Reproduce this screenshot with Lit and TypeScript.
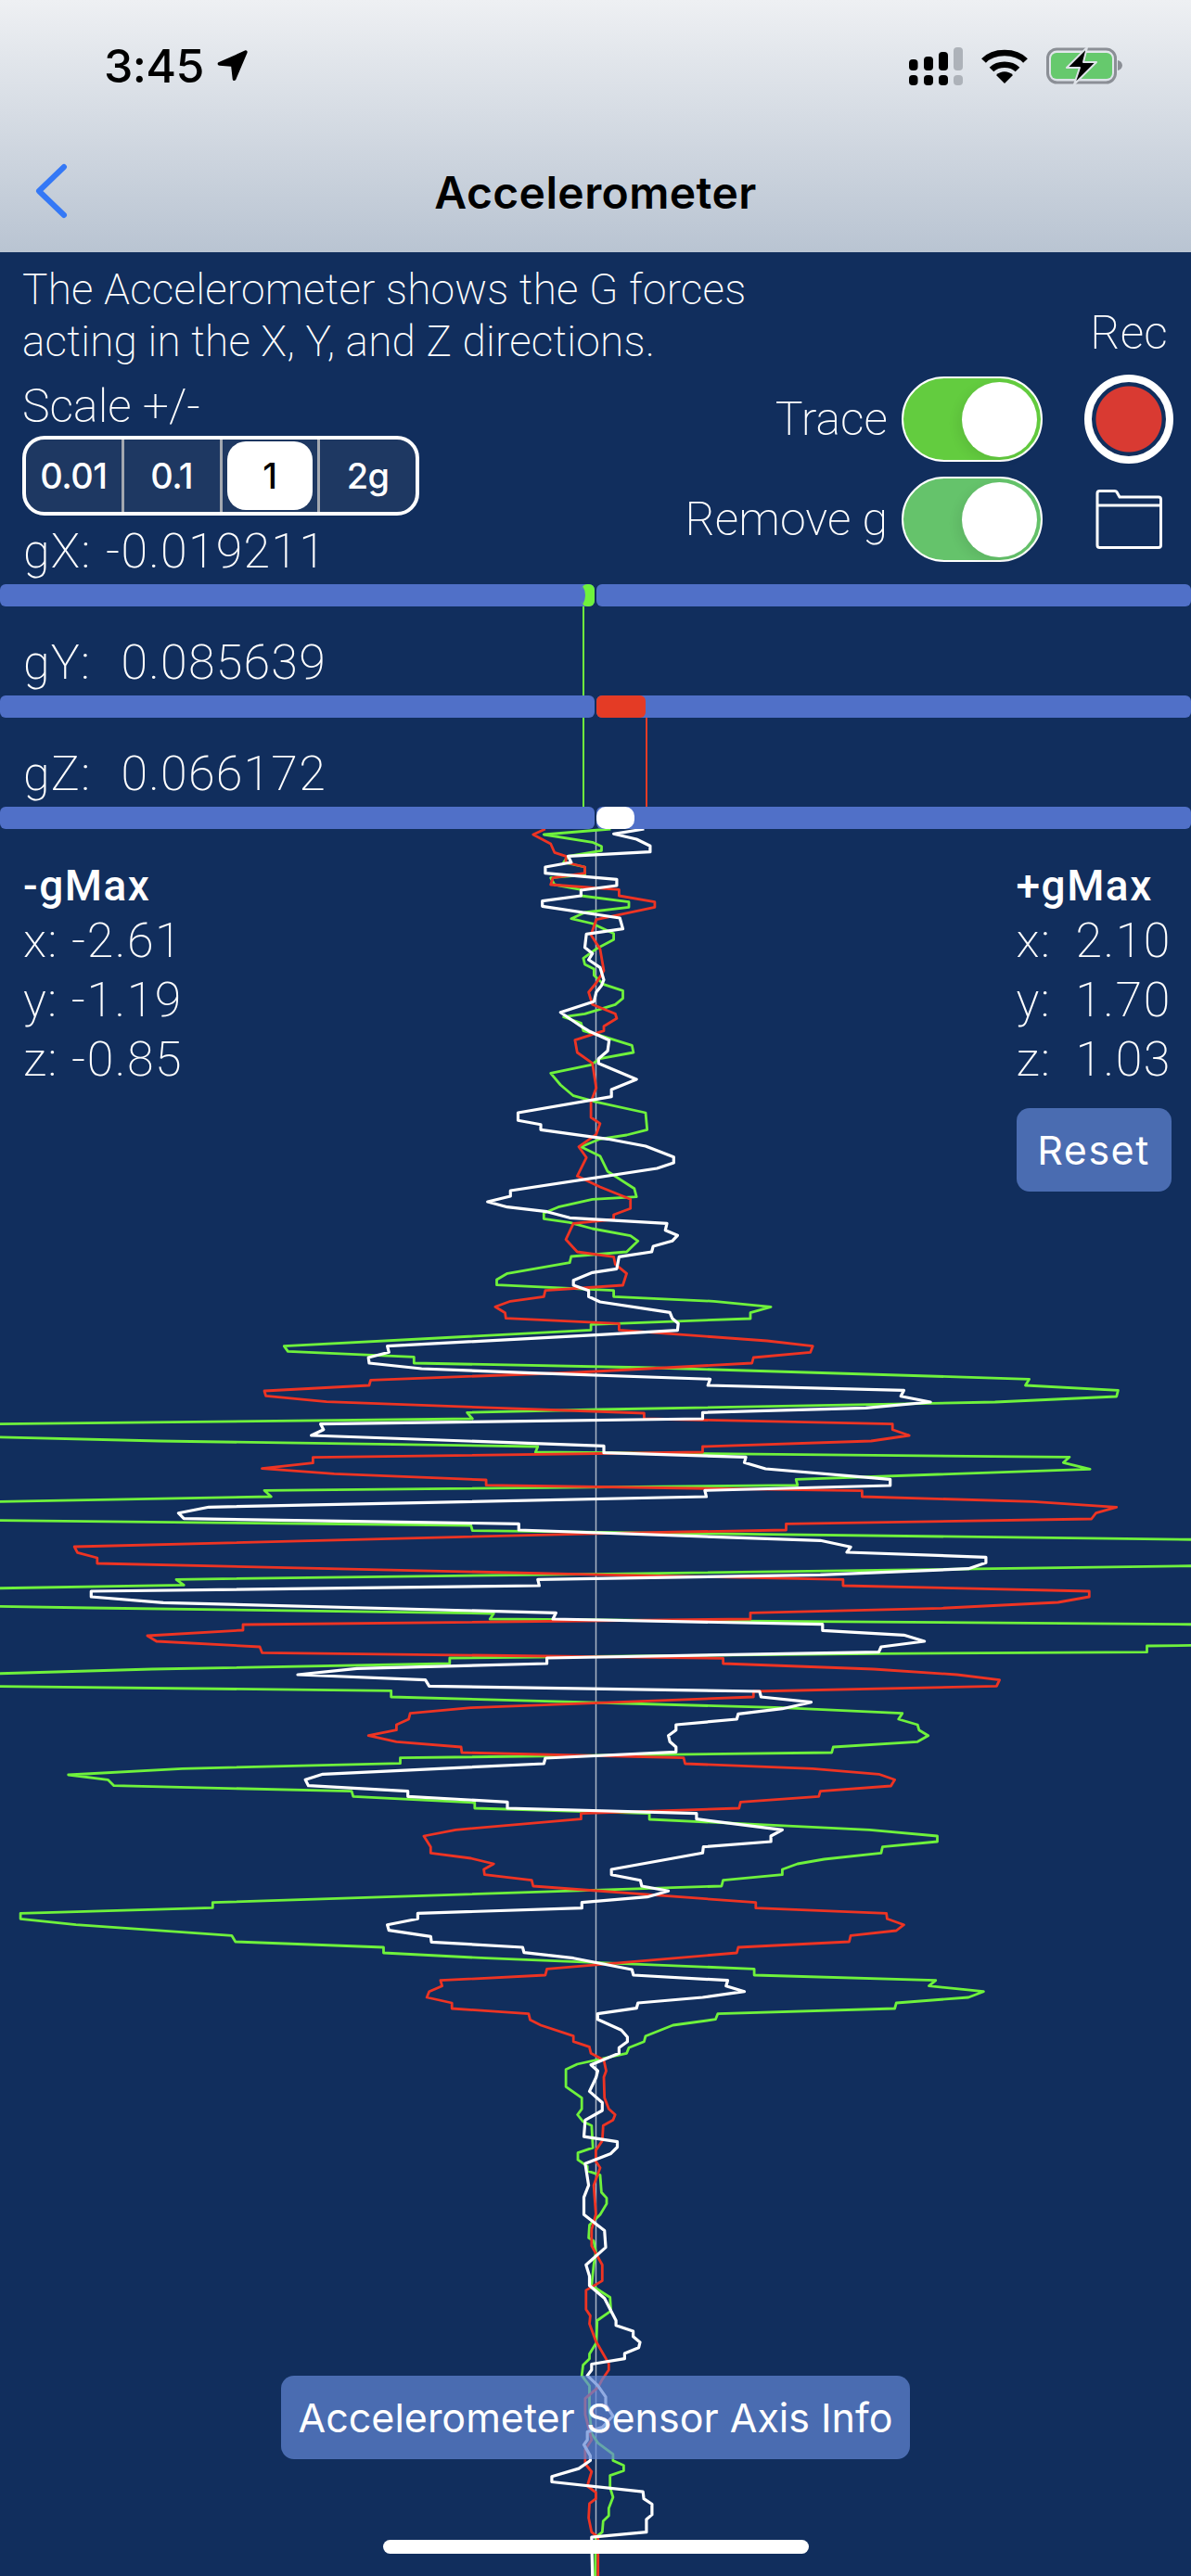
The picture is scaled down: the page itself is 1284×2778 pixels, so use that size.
import { LitElement, html, css, svg } from 'lit'
import { customElement } from 'lit/decorators.js'

// Traces were read off at different crop scales, so each chunk keeps its own mapping
type Chunk = { ox: number; oy: number; sx: number; sy: number; pts: number[] }

const mid = (oy: number, pts: number[]): Chunk => ({ ox: 0, oy, sx: 1.2212, sy: 3, pts })
const low = (pts: number[]): Chunk => ({ ox: 280, oy: 2240, sx: 2.166, sy: 2.914, pts })

const WHITE: Chunk[] = [
  mid(880, [848,42,808,58,838,75,856,97,856,116,748,130,752,150,718,165,718,185,812,205,812,225,765,240,765,258,714,275,714,292,816,330,820,365,772,382,770,425,780,445,775,465,790,490,795,530,792,548,785,570,782,600,738,635,765,680,775,695,802,725,800,760,788,785,788,800,838,852,805,885,805,908,682,960,682,985,712,998,712,1015,800,1045,850,1068,887,1103,887,1122,865,1140,672,1212,672,1230,642,1248,668,1265,720,1280,750,1300,878,1318,876,1340,892,1357,885,1375]),
  mid(1340, [860,12,858,30,815,46,812,85,780,97,755,122,755,138,775,155,775,175,790,192,882,226,885,245,893,262,892,284,790,298,510,335,512,355,485,372,486,390,555,408,700,422,935,442,932,462,1190,478,1186,497,1225,516,1140,535,925,550,925,570,422,587,426,605,410,624,795,658,795,680,982,694,980,712,1008,732,1172,766,1172,786,928,802,930,822,275,856,235,875,242,893,683,910,683,930,1080,964,1120,985,1115,1002,1298,1018,1298,1036,1275,1055,1080,1075,708,1090,710,1110,120,1128,120,1146,215,1165,732,1198,728,1218,1083,1235,1083,1255,1190,1270,1217,1290,1160,1308,1157,1325,720,1344,720,1362,470,1378]),
  mid(1800, [392,18,560,35,565,55,1000,72,1002,90,1068,107,1030,128,972,145,970,162,890,180,890,197,880,215,882,235,890,252,890,268,718,288,716,306,425,340,402,358,406,377,537,395,537,412,668,430,668,450,917,467,917,485,1030,520,1015,540,1015,558,926,575,925,595,805,648,805,665,843,683,845,702,880,718,852,737,766,755,766,773,550,790,550,808,510,827,512,845,567,865,568,883,688,900,690,917,755,935,832,972,834,990,958,1007,956,1025,980,1043,925,1062,840,1080,838,1097,787,1115,787,1133,818,1168,826,1190,826,1205,815,1225,815,1243,778,1280,787,1300,785,1320]),
  low([770,45,800,80,800,105,760,135,757,187,835,203,835,220,820,240,760,272,768,340,757,378,757,432,805,482,808,535,762,590,770,625,770,655,805,695,832,765,832,780,872,798,872,815,888,833,885,850,852,868,852,885,775,902,775,920,765,938,790,970,808,1005,808,1030,825,1065,800,1100,765,1115,765,1140,757,1155,772,1190,772,1205,745,1230,682,1255,682,1272,895,1303,897,1325,916,1342,916,1375,903,1390,903,1430,775,1446,777,1568]),
]

const GREEN: Chunk[] = [
  mid(880, [804,42,716,60,780,85,792,98,792,112,748,130,742,150,770,165,770,190,725,200,730,222,765,238,765,258,828,278,828,295,770,312,752,332,780,348,808,380,808,400,785,430,768,460,770,480,782,495,782,515,795,545,820,565,820,590,810,610,770,640,742,650,765,670,768,695,790,710,832,742,834,765,790,785,778,805,725,832,738,870,755,905,785,925,850,960,852,1015,825,1032,790,1045,765,1070,790,1100,800,1150,835,1205,838,1232,780,1240,735,1265,716,1285,716,1303,750,1315,780,1335,830,1358,840,1375]),
  mid(1340, [825,30,752,45,750,65,668,100,654,120,654,137,808,155,808,175,940,190,1015,208,988,227,988,246,778,265,778,283,374,335,379,352,545,370,545,390,860,405,1355,442,1350,462,1472,478,1470,498,1310,516,790,540,615,550,622,570,-40,588,-40,627,210,642,708,660,705,678,1408,694,1400,712,1435,733,1048,766,1050,785,348,802,357,822,-40,840,-40,898,620,915,622,932,1610,962,1610,1045,800,1072,232,1090,242,1108,-40,1120,-40,1175,120,1182,650,1200,645,1218,1610,1236,1610,1302,1510,1305,1510,1325,1157,1330,592,1344,592,1362,200,1380,-40,1397]),
  mid(1800, [-40,55,515,70,515,90,1030,125,1188,143,1183,162,1208,180,1210,197,1222,215,1208,235,1097,252,1095,270,527,287,527,305,240,322,90,342,142,358,150,377,463,395,465,412,625,432,625,450,855,467,855,486,1145,520,1234,540,1234,558,1162,575,1160,595,1085,615,1050,630,1030,648,1030,665,952,683,950,702,280,755,280,772,27,790,27,808,100,827,305,862,310,882,505,900,505,918,640,935,993,970,993,990,1232,1007,1223,1025,1295,1043,1275,1062,1180,1080,1178,1098,945,1115,942,1133,886,1152,850,1187,848,1205,828,1225,825,1243,760,1278,745,1295,745,1320]),
  low([715,30,752,65,752,100,742,118,755,140,775,152,778,222,743,238,743,260,765,280,765,295,795,308,798,362,810,380,810,398,795,432,770,465,768,505,780,515,785,550,780,590,775,655,818,692,820,735,788,765,786,835,770,870,770,885,755,905,752,938,770,970,770,1050,775,1120,790,1150,825,1185,825,1205,850,1220,850,1237,818,1252,818,1290,825,1320,815,1355,815,1378,802,1395,800,1430,785,1446,783,1568]),
]

const RED: Chunk[] = [
  mid(880, [718,42,702,60,725,90,730,118,745,130,745,150,770,165,770,185,728,200,725,222,815,238,815,258,862,278,862,295,810,322,785,335,778,385,790,430,795,500,785,540,775,570,780,610,810,640,812,655,795,680,795,695,757,725,760,765,780,800,785,880,778,925,778,975,790,995,785,1030,762,1070,772,1105,760,1165,790,1200,830,1240,830,1270,808,1290,808,1305,755,1318,745,1370]),
  mid(1340, [760,30,808,46,810,70,825,100,820,138,718,155,716,175,672,190,652,208,665,227,666,245,815,262,815,283,1010,318,1070,335,1067,355,992,372,990,390,760,420,488,445,486,462,348,480,350,496,430,515,848,552,848,570,1175,587,1175,605,1197,624,1147,642,925,660,925,678,412,695,412,713,345,731,440,748,640,768,640,785,1135,803,1135,822,1360,838,1470,856,1443,875,1437,894,1035,910,1035,930,810,940,98,984,102,1003,128,1020,128,1038,800,1075,1110,1090,1110,1110,1434,1128,1434,1146,1393,1164,1240,1183,988,1198,988,1218,320,1236,320,1254,194,1272,206,1290,342,1308,345,1327,952,1345,952,1362,1150,1380,1260,1398]),
  mid(1800, [1316,35,1312,55,992,72,992,90,620,125,540,143,538,162,522,180,522,197,485,215,522,235,607,252,608,270,900,287,902,306,1070,322,1157,340,1178,358,1173,378,1080,395,1078,412,975,430,973,450,765,467,765,485,600,520,558,540,567,575,567,595,620,612,650,630,637,648,638,665,700,683,702,702,995,755,995,773,1167,790,1168,808,1190,827,1180,846,1120,862,1118,882,972,900,970,918,720,970,718,990,580,1007,582,1025,565,1043,562,1062,595,1080,595,1098,696,1115,698,1135,712,1152,755,1187,755,1205,776,1222,778,1243,795,1265,798,1300,795,1320]),
  low([805,65,815,100,830,118,825,135,802,152,800,200,785,230,785,265,795,285,780,340,785,430,775,480,775,530,800,590,800,640,762,670,762,730,772,750,770,775,785,830,815,900,815,920,800,950,790,975,760,1010,760,1060,775,1140,760,1170,760,1215,775,1240,765,1285,785,1305,785,1325,770,1340,768,1385,775,1430,790,1446,790,1568]),
]

function toPoints(chunks: Chunk[]) {
  const out: string[] = []
  for (const c of chunks) {
    for (let i = 0; i < c.pts.length; i += 2) {
      const x = c.pts[i] / c.sx + c.ox
      const y = c.pts[i + 1] / c.sy + c.oy
      out.push(`${x.toFixed(1)},${y.toFixed(1)}`)
    }
  }
  return out.join(' ')
}

const SCALES = ['0.01', '0.1', '1', '2g']
const METERS = [
  { label: 'gX:', value: '-0.019211', fill: 'green', left: 627, width: 14 },
  { label: 'gY:', value: '0.085639', fill: 'red', left: 643, width: 53 },
  { label: 'gZ:', value: '0.066172', fill: 'white', left: 643, width: 41 },
]

@customElement('app-root')
export class AppRoot extends LitElement {
  static styles = css`
    :host {
      display: block;
      width: 1284px;
      font-family: Inter, 'Liberation Sans', sans-serif;
      color: #fff;
    }

    .screen {
      position: relative;
      width: 1284px;
      height: 2778px;
      overflow: hidden;
      background: #112e5d;
    }

    .graph {
      position: absolute;
      left: 0;
      top: 0;
    }

    /* header */
    .top {
      position: relative;
      height: 272px;
      background: linear-gradient(#eef0f3, #b9c4d2);
      color: #000;
    }

    .status {
      display: flex;
      justify-content: space-between;
      align-items: center;
      height: 52px;
      padding: 45px 74px 0 112px;
    }

    .clock {
      display: flex;
      align-items: center;
      gap: 14px;
      font-size: 50px;
      font-weight: 500;
      letter-spacing: -0.6px;
    }

    .status-icons {
      display: flex;
      align-items: center;
      gap: 20px;
    }

    .nav {
      display: flex;
      align-items: center;
      justify-content: center;
      position: relative;
      height: 70px;
      margin-top: 75px;
    }

    .back {
      position: absolute;
      left: 36px;
      top: 4px;
    }

    .title {
      font-size: 48px;
      font-weight: 600;
      letter-spacing: 0.4px;
    }

    /* controls */
    .panel {
      position: relative;
      display: flex;
      justify-content: space-between;
      height: 308px;
      font-family: Roboto, 'Liberation Sans', sans-serif;
    }

    .intro {
      flex: none;
      width: 560px;
      padding: 12px 0 0 24px;
      font-weight: 200;
      white-space: nowrap;
    }

    .desc {
      font-size: 46px;
      line-height: 56px;
      letter-spacing: 0.2px;
    }

    .scale-label {
      margin-top: 14px;
      font-size: 50px;
      line-height: 56px;
    }

    .seg {
      display: flex;
      box-sizing: border-box;
      width: 428px;
      height: 86px;
      margin-top: 4px;
      border: 4px solid #fff;
      border-radius: 24px;
      background: #1e3862;
      overflow: hidden;
      font-family: Inter, 'Liberation Sans', sans-serif;
    }

    .seg-item {
      position: relative;
      flex: 1;
      display: flex;
      align-items: center;
      justify-content: center;
      font-size: 38px;
      font-weight: 500;
      letter-spacing: -0.5px;
      border-left: 3px solid #a3a8b0;
    }

    .seg-item:first-child {
      border-left: none;
    }

    .seg-item span {
      position: relative;
    }

    .seg-item.on {
      color: #000;
    }

    .seg-item.on::before {
      content: '';
      position: absolute;
      inset: 2px 5px;
      border-radius: 20px;
      background: #fff;
    }

    .side {
      display: grid;
      grid-template-columns: auto 96px;
      grid-template-rows: 112px 108px 108px;
      column-gap: 45px;
      padding: 14px 19px 0 0;
      font-weight: 200;
      font-size: 50px;
      white-space: nowrap;
    }

    .rec-label {
      grid-column: 2;
      align-self: end;
      justify-self: center;
      padding-bottom: 10px;
    }

    .tog-row {
      grid-column: 1;
      display: flex;
      align-items: center;
      justify-content: flex-end;
      gap: 15px;
    }

    .toggle {
      position: relative;
      box-sizing: border-box;
      width: 152px;
      height: 92px;
      border: 2px solid #fff;
      border-radius: 46px;
      background: #63cc3f;
    }

    .toggle.soft {
      background: #65c36b;
    }

    .knob {
      position: absolute;
      right: 4px;
      top: 4px;
      width: 81px;
      height: 81px;
      border-radius: 50%;
      background: #fff;
      box-shadow: -5px 4px 12px rgba(0, 0, 0, 0.07);
    }

    .rec {
      box-sizing: border-box;
      width: 96px;
      height: 96px;
      align-self: center;
      border: 8px solid #fff;
      border-radius: 50%;
      background: radial-gradient(circle, #d93a32 0 35px, #112e5d 36px);
    }

    .folder {
      align-self: center;
      justify-self: center;
    }

    /* meters: the value is right aligned, as on the device */
    .meter-text {
      display: flex;
      justify-content: space-between;
      width: 327px;
      height: 50px;
      padding-left: 25px;
      font-family: Roboto, 'Liberation Sans', sans-serif;
      font-size: 52px;
      line-height: 30px;
      font-weight: 200;
      letter-spacing: 1.2px;
    }

    .meter + .meter {
      margin-top: 46px;
    }

    .bar {
      position: relative;
      display: flex;
      gap: 2px;
      height: 24px;
    }

    .bar i {
      flex: 1;
      background: #5070c8;
      border-radius: 6px;
    }

    .bar b {
      position: absolute;
      top: 0;
      height: 24px;
      border-radius: 6px;
      overflow: hidden;
    }

    .bar b.green {
      background: #6ff23c;
    }

    /* the blue track's end bites into the small green fill */
    .bar b.green::before {
      content: '';
      position: absolute;
      left: -14px;
      top: -1px;
      width: 18px;
      height: 26px;
      border-radius: 50%;
      background: #5070c8;
    }

    .bar b.red {
      background: #e43b25;
    }

    .bar b.white {
      background: #fff;
      border-radius: 10px;
    }

    /* gMax readouts */
    .extremes {
      position: relative;
      display: flex;
      justify-content: space-between;
      padding: 35px 21px 0 25px;
      font-family: Roboto, 'Liberation Sans', sans-serif;
      font-size: 52px;
      font-weight: 200;
      line-height: 64px;
      letter-spacing: 1.5px;
    }

    .extremes h2 {
      margin: 0 0 2px;
      font-size: 46px;
      font-weight: 500;
      line-height: 52px;
      letter-spacing: 1.5px;
    }

    .right {
      display: flex;
      flex-direction: column;
      align-items: flex-start;
      word-spacing: 12px;
    }

    .btn {
      display: flex;
      align-items: center;
      justify-content: center;
      border-radius: 14px;
      font-family: Inter, 'Liberation Sans', sans-serif;
      font-size: 43px;
      font-weight: 400;
      letter-spacing: 0;
      word-spacing: 0;
    }

    .reset {
      width: 167px;
      height: 90px;
      margin-top: 20px;
      background: #4a6cb1;
      letter-spacing: 1.5px;
    }

    .axis {
      position: absolute;
      left: 303px;
      top: 2562px;
      width: 678px;
      height: 90px;
      background: rgba(98, 135, 213, 0.7);
      white-space: nowrap;
    }

    .home {
      position: absolute;
      left: 413px;
      top: 2739px;
      width: 459px;
      height: 15px;
      border-radius: 8px;
      background: #fff;
    }
  `

  private renderGraph() {
    return html`<svg class="graph" width="1284" height="2778" viewBox="0 0 1284 2778" fill="none">
      ${svg`
        <line x1="642.5" y1="894" x2="642.5" y2="2778" stroke="#aab4c4" stroke-width="1.5" />
        <line x1="629" y1="654" x2="629" y2="870" stroke="#6ff23c" stroke-width="2" />
        <line x1="697" y1="774" x2="697" y2="870" stroke="#e43b25" stroke-width="2" />
        <polyline points=${toPoints(GREEN)} stroke="#6ff23c" stroke-width="2.8" stroke-linejoin="round" />
        <polyline points=${toPoints(RED)} stroke="#ee3423" stroke-width="2.8" stroke-linejoin="round" />
        <polyline points=${toPoints(WHITE)} stroke="#fff" stroke-width="3.2" stroke-linejoin="round" />
      `}
    </svg>`
  }

  private renderStatus() {
    return html`<div class="status">
      <div class="clock">
        3:45
        <svg width="33" height="34" viewBox="0 0 33 34" fill="#000">
          <path d="M30 .6 2 13c-2.200 1-1.600 3.600.7 3.700l12.500 1 1.500 13.500c.3 2.300 3 2.500 3.700.4L32.500 3c.6-1.800-.8-3.200-2.500-2.400Z" />
        </svg>
      </div>
      <div class="status-icons">
        <svg width="58" height="41" viewBox="0 0 58 41" fill="#000">
          <rect x="0" y="13" width="9.500" height="12" rx="4" /><rect x="0" y="30" width="9.500" height="11" rx="4" />
          <rect x="16" y="10" width="10" height="15" rx="4" /><rect x="16" y="30" width="10" height="11" rx="4" />
          <rect x="32" y="5" width="10" height="20" rx="4" /><rect x="32" y="30" width="10" height="11" rx="4" />
          <rect x="48" y="0" width="10" height="25" rx="4" fill="#adb2b9" /><rect x="48" y="30" width="10" height="11" rx="4" fill="#adb2b9" />
        </svg>
        <svg width="50" height="37" viewBox="0 0 50 37" fill="none" stroke="#000" stroke-width="6.500">
          <path d="M2.500 12.500C13 1 37 1 47.500 12.500" />
          <path d="M11 22C18 15 32 15 39 22" />
          <path d="M25 37 16 28c5-5 13-5 18 0Z" fill="#000" stroke="none" />
        </svg>
        <svg width="82" height="40" viewBox="0 0 82 40" fill="none">
          <rect x="1.500" y="2" width="73" height="36" rx="10" stroke="#8b8f96" stroke-width="3" />
          <rect x="5" y="6" width="66" height="28" rx="6" fill="#66c96d" />
          <path d="M77 14c3 .8 5 3 5 5.500S80 24.200 77 25Z" fill="#8b8f96" />
          <path d="M44 0 22 22h14l-6 18 24-24H40Z" fill="#000" stroke="#dfe3e9" stroke-width="2" stroke-linejoin="round" />
        </svg>
      </div>
    </div>`
  }

  render() {
    return html`<div class="screen">
      ${this.renderGraph()}
      <header class="top">
        ${this.renderStatus()}
        <div class="nav">
          <svg class="back" width="40" height="60" viewBox="0 0 40 60" fill="none">
            <path d="M33 4 6 30l27 26" stroke="#3478f6" stroke-width="6" stroke-linecap="round" stroke-linejoin="round" />
          </svg>
          <span class="title">Accelerometer</span>
        </div>
      </header>

      <section class="panel">
        <div class="intro">
          <div class="desc">The Accelerometer shows the G forces<br />acting in the X, Y, and Z directions.</div>
          <div class="scale-label">Scale +/-</div>
          <div class="seg">
            ${SCALES.map(s => html`<div class="seg-item ${s === '1' ? 'on' : ''}"><span>${s}</span></div>`)}
          </div>
        </div>
        <div class="side">
          <div class="rec-label">Rec</div>
          <div class="tog-row">Trace <div class="toggle"><div class="knob"></div></div></div>
          <div class="rec"></div>
          <div class="tog-row">Remove g <div class="toggle soft"><div class="knob"></div></div></div>
          <svg class="folder" width="72" height="64" viewBox="0 0 72 64" fill="none" stroke="#fff" stroke-width="3">
            <path d="M2 60V4c0-1.500 1-2.500 2.500-2.500h16c1.500 0 2.500.7 3 2L26 8h42c1.500 0 2.500 1 2.500 2.500V60c0 1.500-1 2.500-2.500 2.500H4.500C3 62.500 2 61.500 2 60Z" />
            <path d="M2 17h68.500" />
          </svg>
        </div>
      </section>

      ${METERS.map(m => html`<div class="meter">
        <div class="meter-text"><span>${m.label}</span><span>${m.value}</span></div>
        <div class="bar">
          <i></i><i></i>
          <b class=${m.fill} style="left:${m.left}px;width:${m.width}px"></b>
        </div>
      </div>`)}

      <section class="extremes">
        <div>
          <h2>-gMax</h2>
          <div>x: -2.61</div>
          <div>y: -1.19</div>
          <div>z: -0.85</div>
        </div>
        <div class="right">
          <h2>+gMax</h2>
          <div>x: 2.10</div>
          <div>y: 1.70</div>
          <div>z: 1.03</div>
          <div class="btn reset">Reset</div>
        </div>
      </section>

      <div class="btn axis">Accelerometer Sensor Axis Info</div>
      <div class="home"></div>
    </div>`
  }
}
